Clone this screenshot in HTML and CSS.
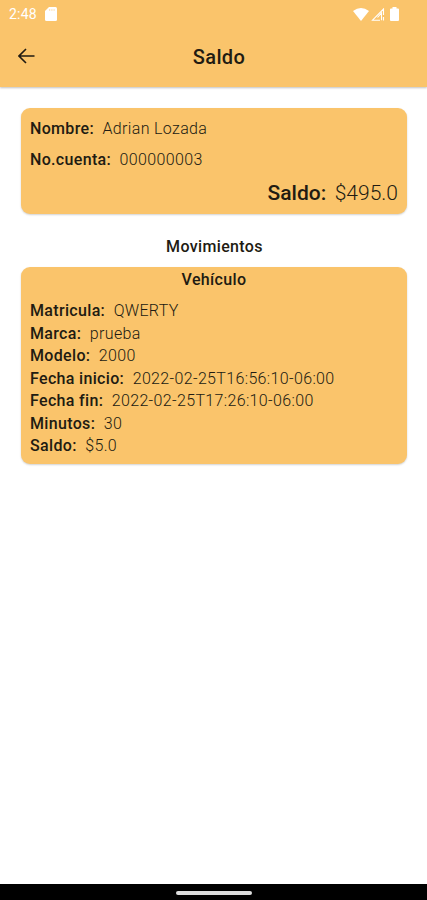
FILE: index.html
```html
<!DOCTYPE html>
<html lang="es">
<head>
  <meta charset="UTF-8">
  <meta name="viewport" content="width=device-width, initial-scale=1.0">
  <title>Saldo</title>
  <link rel="stylesheet" href="styles.css">
</head>
<body>
  <header class="header">
    <div class="status-bar">
      <span class="time">2:48</span>
      <svg class="sd-icon" width="12" height="14" viewBox="0 0 12 14">
        <path d="M4 0h6.500Q12 0 12 1.500v11q0 1.500-1.500 1.500h-9Q0 14 0 12.500V4z" fill="#fff"/>
        <path d="M4.700 2v2M6.900 2v2M9.100 2v2" stroke="#fac46b" stroke-width="0.500"/>
      </svg>
      <div class="status-icons">
        <svg width="16" height="13" viewBox="0 0 16 13">
          <path d="M0 3Q8-3 16 3L8 13z" fill="#fff"/>
        </svg>
        <svg width="14" height="13" viewBox="0 0 14 13">
          <path d="M12.500 7V1L1.500 12.200H9M6.500 9.500L10.500 5v7.200M12.500 9v3.500" fill="none" stroke="#fff" stroke-width="1.100"/>
        </svg>
        <svg class="battery" width="9" height="14" viewBox="0 0 9 14">
          <path d="M2.500 0h4v1.400H8q1 0 1 1V13q0 1-1 1H1q-1 0-1-1V2.400q0-1 1-1h1.500z" fill="#fff"/>
        </svg>
      </div>
    </div>
    <div class="nav-bar">
      <svg class="back" width="18" height="16" viewBox="0 0 18 16">
        <path d="M16.500 8H1.500M8 1L1 8l7 7" fill="none" stroke="#211b12" stroke-width="1.600"/>
      </svg>
      <h1 class="title">Saldo</h1>
    </div>
  </header>

  <main class="content">
    <section class="card account">
      <p class="row"><b>Nombre:</b><span>Adrian Lozada</span></p>
      <p class="row"><b>No.cuenta:</b><span>000000003</span></p>
      <p class="row balance"><b>Saldo:</b><span>$495.0</span></p>
    </section>

    <h2 class="subtitle">Movimientos</h2>

    <section class="card movement">
      <h3 class="card-title">Vehículo</h3>
      <p class="row"><b>Matricula:</b><span>QWERTY</span></p>
      <p class="row"><b>Marca:</b><span>prueba</span></p>
      <p class="row"><b>Modelo:</b><span>2000</span></p>
      <p class="row"><b>Fecha inicio:</b><span>2022-02-25T16:56:10-06:00</span></p>
      <p class="row"><b>Fecha fin:</b><span>2022-02-25T17:26:10-06:00</span></p>
      <p class="row"><b>Minutos:</b><span>30</span></p>
      <p class="row"><b>Saldo:</b><span>$5.0</span></p>
    </section>
  </main>

  <footer class="system-bar">
    <div class="handle"></div>
  </footer>
</body>
</html>
```

FILE: styles.css
```css
* {
  box-sizing: border-box;
}

body {
  margin: 0;
  height: 900px;
  display: flex;
  flex-direction: column;
  background-color: #fff;
  color: #211b12;
  font-family: Roboto, sans-serif;
  font-size: 16px;
  letter-spacing: 0.35px;
}

h1, h2, h3, p {
  margin: 0;
}

.header {
  height: 87px;
  background-color: #fac46b;
  box-shadow: 0 1px 2px rgba(0, 0, 0, 0.25);
}

.status-bar {
  display: flex;
  align-items: center;
  height: 28px;
  padding: 0 28px 0 9px;
  color: #fff;
}

.time {
  width: 28px;
  font-size: 14px;
  letter-spacing: 0.2px;
}

.sd-icon {
  margin-left: 8px;
}

.status-icons {
  display: flex;
  align-items: center;
  gap: 2px;
  margin-left: auto;
}

.battery {
  margin-left: 3px;
}

.nav-bar {
  display: grid;
  grid-template-columns: 47px 1fr 36px;
  align-items: center;
  height: 58px;
  padding: 0 18px;
}

.back {
  margin-bottom: 2px;
}

.title {
  grid-column: 2;
  text-align: center;
  font-size: 20px;
  font-weight: 500;
}

.content {
  flex: 1;
  padding: 21px 20px 0 21px;
}

.card {
  padding: 0 9px;
  border-radius: 9px;
  background-color: #fac46b;
  box-shadow: 0 1px 2px rgba(0, 0, 0, 0.18);
}

.row {
  display: flex;
  gap: 8.5px;
  line-height: 22.5px;
}

.row b {
  font-weight: 500;
  letter-spacing: 0.33px;
}

.row span {
  font-weight: 300;
}

.account {
  height: 106px;
  padding-top: 5px;
}

.account .row {
  line-height: 31px;
}

.account .balance {
  justify-content: flex-end;
  font-size: 21px;
  line-height: 37px;
}

.balance b,
.balance span {
  letter-spacing: 0;
}

.subtitle {
  height: 53px;
  padding: 20px 0 0 1px;
  text-align: center;
  font-size: 16px;
  font-weight: 500;
  line-height: 26px;
}

.movement {
  height: 197px;
}

.card-title {
  height: 33px;
  text-align: center;
  font-size: 16px;
  font-weight: 500;
  line-height: 25px;
}

.system-bar {
  display: flex;
  justify-content: center;
  align-items: center;
  height: 16px;
  background-color: #000;
}

.handle {
  width: 76px;
  height: 4px;
  margin-top: 2px;
  border-radius: 2px;
  background-color: #ddd;
}
```
